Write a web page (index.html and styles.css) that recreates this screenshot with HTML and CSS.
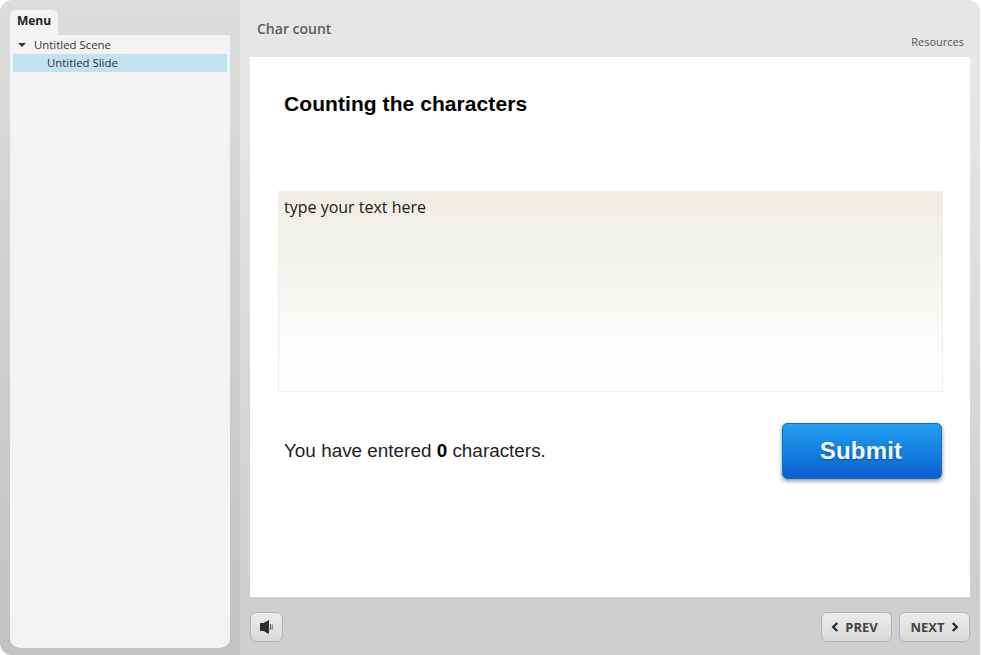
FILE: index.html
```html
<!DOCTYPE html>
<html lang="en">
<head>
    <meta charset="UTF-8">
    <meta name="viewport" content="width=device-width, initial-scale=1.0">
    <title>Char count</title>
    <link rel="stylesheet" href="styles.css">
</head>
<body>
    <div class="player">
        <aside class="sidebar">
            <div class="tab">Menu</div>
            <div class="menu">
                <div class="scene"><span class="arrow"></span>Untitled Scene</div>
                <div class="slide">Untitled Slide</div>
            </div>
        </aside>
        <main class="main">
            <header class="topbar">
                <div class="title">Char count</div>
                <div class="resources">Resources</div>
            </header>
            <section class="stage">
                <h1>Counting the characters</h1>
                <div class="textbox">type your text here</div>
                <div class="result-row">
                    <p class="count">You have entered <b>0</b> characters.</p>
                    <button class="submit">Submit</button>
                </div>
            </section>
            <footer class="controls">
                <button class="ctl volume" aria-label="Volume">
                    <svg width="16" height="18" viewBox="0 0 16 18">
                        <path d="M1 5h3.5L10 2v14l-5.5-3H1z" fill="#2e2e2e"/>
                        <path d="M11.5 6v6M13.2 6.5v5" stroke="#555" stroke-width="0.9" fill="none"/>
                    </svg>
                </button>
                <div class="nav">
                    <button class="ctl prev">
                        <svg width="8" height="10" viewBox="0 0 8 10"><path d="M6.2 1L2.2 5l4 4" stroke="#2e2e2e" stroke-width="2.4" fill="none"/></svg>
                        PREV
                    </button>
                    <button class="ctl next">
                        NEXT
                        <svg width="8" height="10" viewBox="0 0 8 10"><path d="M1.8 1l4 4-4 4" stroke="#2e2e2e" stroke-width="2.4" fill="none"/></svg>
                    </button>
                </div>
            </footer>
        </main>
    </div>
</body>
</html>
```

FILE: styles.css
```css
* {
    box-sizing: border-box;
}
body {
    margin: 0;
    background: #fff;
    font-family: 'Open Sans', sans-serif;
}
.player {
    display: flex;
    width: 980px;
    height: 655px;
    border-radius: 12px 12px 0 12px;
    overflow: hidden;
}

/* Left menu */
.sidebar {
    display: flex;
    flex-direction: column;
    width: 240px;
    padding: 10px 10px 7px;
    background: linear-gradient(#dcdcdc, #c2c2c2);
}
.tab {
    width: 48px;
    height: 25px;
    padding-top: 2px;
    text-align: center;
    font-size: 12px;
    font-weight: 700;
    color: #222;
    background: #f3f3f3;
    border-radius: 6px 6px 0 0;
}
.menu {
    flex: 1;
    padding: 0 3px;
    font-size: 11.4px;
    color: #333;
    background: #f3f3f3;
    border-radius: 0 0 10px 10px;
}
.scene {
    display: flex;
    align-items: center;
    height: 19px;
    padding-left: 5px;
}
.arrow {
    width: 0;
    height: 0;
    margin-right: 8px;
    border-left: 4px solid transparent;
    border-right: 4px solid transparent;
    border-top: 4px solid #333;
}
.slide {
    height: 18px;
    padding-left: 34px;
    line-height: 18px;
    background: #c2e1f1;
}

/* Main column */
.main {
    display: flex;
    flex-direction: column;
    flex: 1;
    background: linear-gradient(#e7e7e7 10%, #cecece 90%);
}
.topbar {
    display: flex;
    justify-content: space-between;
    height: 57px;
    padding: 0 16px 0 17px;
    background: #e6e6e6;
}
.title {
    margin-top: 19px;
    font-size: 14px;
    font-weight: 600;
    color: #5c5c5c;
}
.resources {
    margin-top: 34px;
    font-size: 11px;
    color: #555;
}
.stage {
    height: 540px;
    margin: 0 10px;
    padding: 34px 27px 0 28px;
    background: #fff;
}
h1 {
    margin: 0 0 74px 6px;
    font-family: 'Liberation Sans', sans-serif;
    font-size: 21px;
    line-height: 26px;
    letter-spacing: 0.07px;
    color: #000;
}
.textbox {
    height: 201px;
    padding: 4px 5px;
    font-size: 16px;
    line-height: 22px;
    color: #1a1a1a;
    border: 1px solid #f0eeea;
    background: linear-gradient(#efece5, #fff);
}
.result-row {
    display: flex;
    justify-content: space-between;
    align-items: center;
    margin-top: 31px;
    padding: 0 1px 0 6px;
}
.count {
    margin: 0;
    font-family: 'Liberation Sans', sans-serif;
    font-size: 18.9px;
    color: #222;
}
.count b {
    color: #000;
}
.submit {
    width: 160px;
    height: 56px;
    padding: 0 2px 0 0;
    font-family: 'Liberation Sans', sans-serif;
    font-size: 24px;
    font-weight: 700;
    letter-spacing: 0.2px;
    color: #f2f8ff;
    text-shadow: 0 1px 2px rgba(0, 0, 0, 0.35);
    border: 1px solid #0f6fc0;
    border-radius: 5px;
    background: linear-gradient(#22a0ee, #0a5fd4);
    box-shadow: 0 2px 4px rgba(0, 0, 0, 0.45);
}

/* Bottom controls */
.controls {
    display: flex;
    justify-content: space-between;
    align-items: center;
    flex: 1;
    padding: 2px 10px 0;
    background: #cfcfcf;
}
.nav {
    display: flex;
    gap: 7px;
}
.ctl {
    display: flex;
    justify-content: center;
    align-items: center;
    gap: 6px;
    height: 30px;
    padding: 0;
    font-family: 'Open Sans', sans-serif;
    font-size: 13px;
    font-weight: 700;
    color: #444;
    border: 1px solid #b4b4b4;
    border-radius: 6px;
    background: linear-gradient(#ececec, #d9d9d9);
}
.volume {
    width: 33px;
}
.prev {
    width: 71px;
    padding-right: 4px;
}
.next {
    width: 71px;
}
```
